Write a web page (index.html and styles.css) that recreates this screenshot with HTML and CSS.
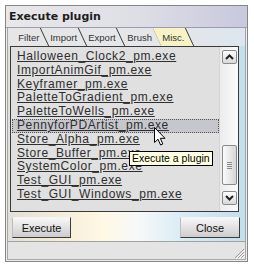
FILE: index.html
```html
<!DOCTYPE html>
<html lang="en">
<head>
    <meta charset="UTF-8">
    <meta name="viewport" content="width=device-width, initial-scale=1.0">
    <title>Execute plugin</title>
    <link rel="stylesheet" href="styles.css">
</head>
<body>
    <div class="window">
        <div class="titlebar">Execute plugin</div>
        <div class="body">
            <div class="tabs">
                <div class="tab"><span>Filter</span></div>
                <div class="tab"><span>Import</span></div>
                <div class="tab"><span>Export</span></div>
                <div class="tab"><span>Brush</span></div>
                <div class="tab active"><span>Misc.</span></div>
            </div>

            <div class="listbox">
                <ul class="items">
                    <li>Halloween_Clock2_pm.exe</li>
                    <li>ImportAnimGif_pm.exe</li>
                    <li>Keyframer_pm.exe</li>
                    <li>PaletteToGradient_pm.exe</li>
                    <li>PaletteToWells_pm.exe</li>
                    <li class="selected">PennyforPDArtist_pm.exe</li>
                    <li>Store_Alpha_pm.exe</li>
                    <li>Store_Buffer_pm.exe</li>
                    <li>SystemColor_pm.exe</li>
                    <li>Test_GUI_pm.exe</li>
                    <li>Test_GUI_Windows_pm.exe</li>
                </ul>
                <div class="scrollbar">
                    <div class="sb-btn">
                        <svg width="9" height="6" viewBox="0 0 9 6"><path d="M1 5 L4.5 1.5 L8 5" fill="none" stroke="#222" stroke-width="2"/></svg>
                    </div>
                    <div class="sb-track">
                        <div class="sb-thumb">
                            <svg width="5" height="7" viewBox="0 0 5 7"><path d="M0 0.5H5M0 2.5H5M0 4.5H5M0 6.5H5" stroke="#8a8a8a" stroke-width="1"/></svg>
                        </div>
                    </div>
                    <div class="sb-btn">
                        <svg width="9" height="6" viewBox="0 0 9 6"><path d="M1 1 L4.5 4.5 L8 1" fill="none" stroke="#222" stroke-width="2"/></svg>
                    </div>
                </div>
            </div>

            <div class="actions">
                <button class="btn">Execute</button>
                <button class="btn close">Close</button>
            </div>

            <div class="statusbar">
                <svg class="grip" width="12" height="12" viewBox="0 0 12 12">
                    <path d="M11 2L2 11M11 5L5 11M11 8L8 11" stroke="#9a9a9a" stroke-width="1"/>
                    <path d="M12 3L3 12M12 6L6 12M12 9L9 12" stroke="#fff" stroke-width="1"/>
                </svg>
            </div>
        </div>

        <svg class="cursor" width="12" height="19" viewBox="0 0 12 19">
            <path d="M0.5 0.5 L0.5 15.5 L4 12.2 L6.6 18 L8.8 17 L6.3 11.3 L11 11.3 Z" fill="#fff" stroke="#000" stroke-width="1" stroke-linejoin="round"/>
        </svg>
        <div class="tooltip">Execute a plugin</div>
    </div>
</body>
</html>
```

FILE: styles.css
```css
body {
    margin: 0;
    background-color: #fff;
    font-family: "Liberation Sans", Arial, sans-serif;
}
.window {
    position: relative;
    display: flex;
    flex-direction: column;
    box-sizing: border-box;
    width: 243px;
    height: 257px;
    margin: 5px 0 0 5px;
    border: 1px solid #868686;
    background-color: #ececec;
}
.titlebar {
    flex: 0 0 21px;
    line-height: 21px;
    padding-left: 3px;
    font-family: "DejaVu Sans", sans-serif;
    font-weight: bold;
    font-size: 11px;
    color: #1e1e1e;
    background: linear-gradient(to right, #e8e8e9, #dedee6 55%, #c8c8de);
    border-bottom: 1px solid #9c9cae;
}
.body {
    flex: 1;
    display: flex;
    flex-direction: column;
    margin: 0 1px 1px;
    border: 1px solid #a6a6a6;
    border-top: none;
    background: linear-gradient(to right, #e2e0da 0%, #f2ead4 18%, #fff8e4 40%, #f6f9fa 55%, #d8ebf3 75%, #c2dfed 100%);
}
.tabs {
    flex: 0 0 18px;
    display: flex;
    padding-left: 5px;
    font-size: 9.5px;
    color: #333;
    background: linear-gradient(to right, #e6e6e6, #e4e6ea 65%, #dde6ee);
}
.tab {
    display: flex;
    align-items: center;
    padding: 0 5px 0 5px;
    border-right: 1px solid #3a3a3a;
    transform: skewX(25deg);
}
.tab span {
    transform: skewX(-25deg);
}
.tab.active {
    background-color: #f8f3c4;
}
.listbox {
    flex: 0 0 166px;
    display: flex;
    box-sizing: border-box;
    margin: 0 6px 0 2px;
    border: 1px solid #3a3a3a;
    background-color: #e0e0e0;
}
.items {
    flex: 1;
    margin: 0;
    padding: 3px 0 0 1px;
    list-style: none;
    overflow: hidden;
    font-size: 12px;
    letter-spacing: 0.6px;
    line-height: 13.8px;
    color: #2e2e2e;
}
.items li {
    padding-left: 5px;
    white-space: nowrap;
    text-decoration: underline;
}
.items li.selected {
    background-color: #c6c6cd;
    outline: 1px dotted #555;
    outline-offset: -1px;
}
.scrollbar {
    flex: 0 0 15px;
    display: flex;
    flex-direction: column;
    padding: 3px 1px 6px 2px;
    border-left: 1px solid #d4d4d4;
    background: linear-gradient(to right, #ececec, #fbfbfb);
}
.sb-btn {
    display: flex;
    align-items: center;
    justify-content: center;
    box-sizing: border-box;
    height: 14px;
    border: 1px solid #8a8a8a;
    border-radius: 2px;
    background: linear-gradient(#fdfdfd, #d9d9d9);
}
.sb-track {
    flex: 1;
    display: flex;
    flex-direction: column;
}
.sb-thumb {
    display: flex;
    align-items: center;
    justify-content: center;
    box-sizing: border-box;
    height: 40px;
    margin-top: auto;
    margin-bottom: 6px;
    border: 1px solid #8a8a8a;
    border-radius: 2px;
    background: linear-gradient(to right, #fbfbfb, #d6d6d6);
}
.actions {
    flex: 0 0 29px;
    display: flex;
    justify-content: space-between;
    align-items: flex-start;
    box-sizing: border-box;
    padding: 5px 5px 0 4px;
}
.btn {
    width: 59px;
    height: 21px;
    padding: 0;
    font-family: "Liberation Sans", Arial, sans-serif;
    font-size: 11px;
    color: #111;
    border: 1px solid;
    border-color: #f4f4f4 #3c3c3c #3c3c3c #bdbdbd;
    background: linear-gradient(#f7f7f7, #cdcdcd);
}
.btn.close {
    width: 60px;
}
.statusbar {
    flex: 1;
    display: flex;
    justify-content: flex-end;
    align-items: flex-end;
    border-top: 1px solid #a2a2a2;
    background-color: #e4e4e4;
}
.grip {
    display: block;
}
.cursor {
    position: absolute;
    left: 148px;
    top: 121px;
}
.tooltip {
    position: absolute;
    left: 123px;
    top: 145px;
    padding: 0 2px;
    line-height: 13px;
    font-size: 10.5px;
    color: #000;
    background-color: #ffffe1;
    border: 1px solid #000;
    white-space: nowrap;
}
```
